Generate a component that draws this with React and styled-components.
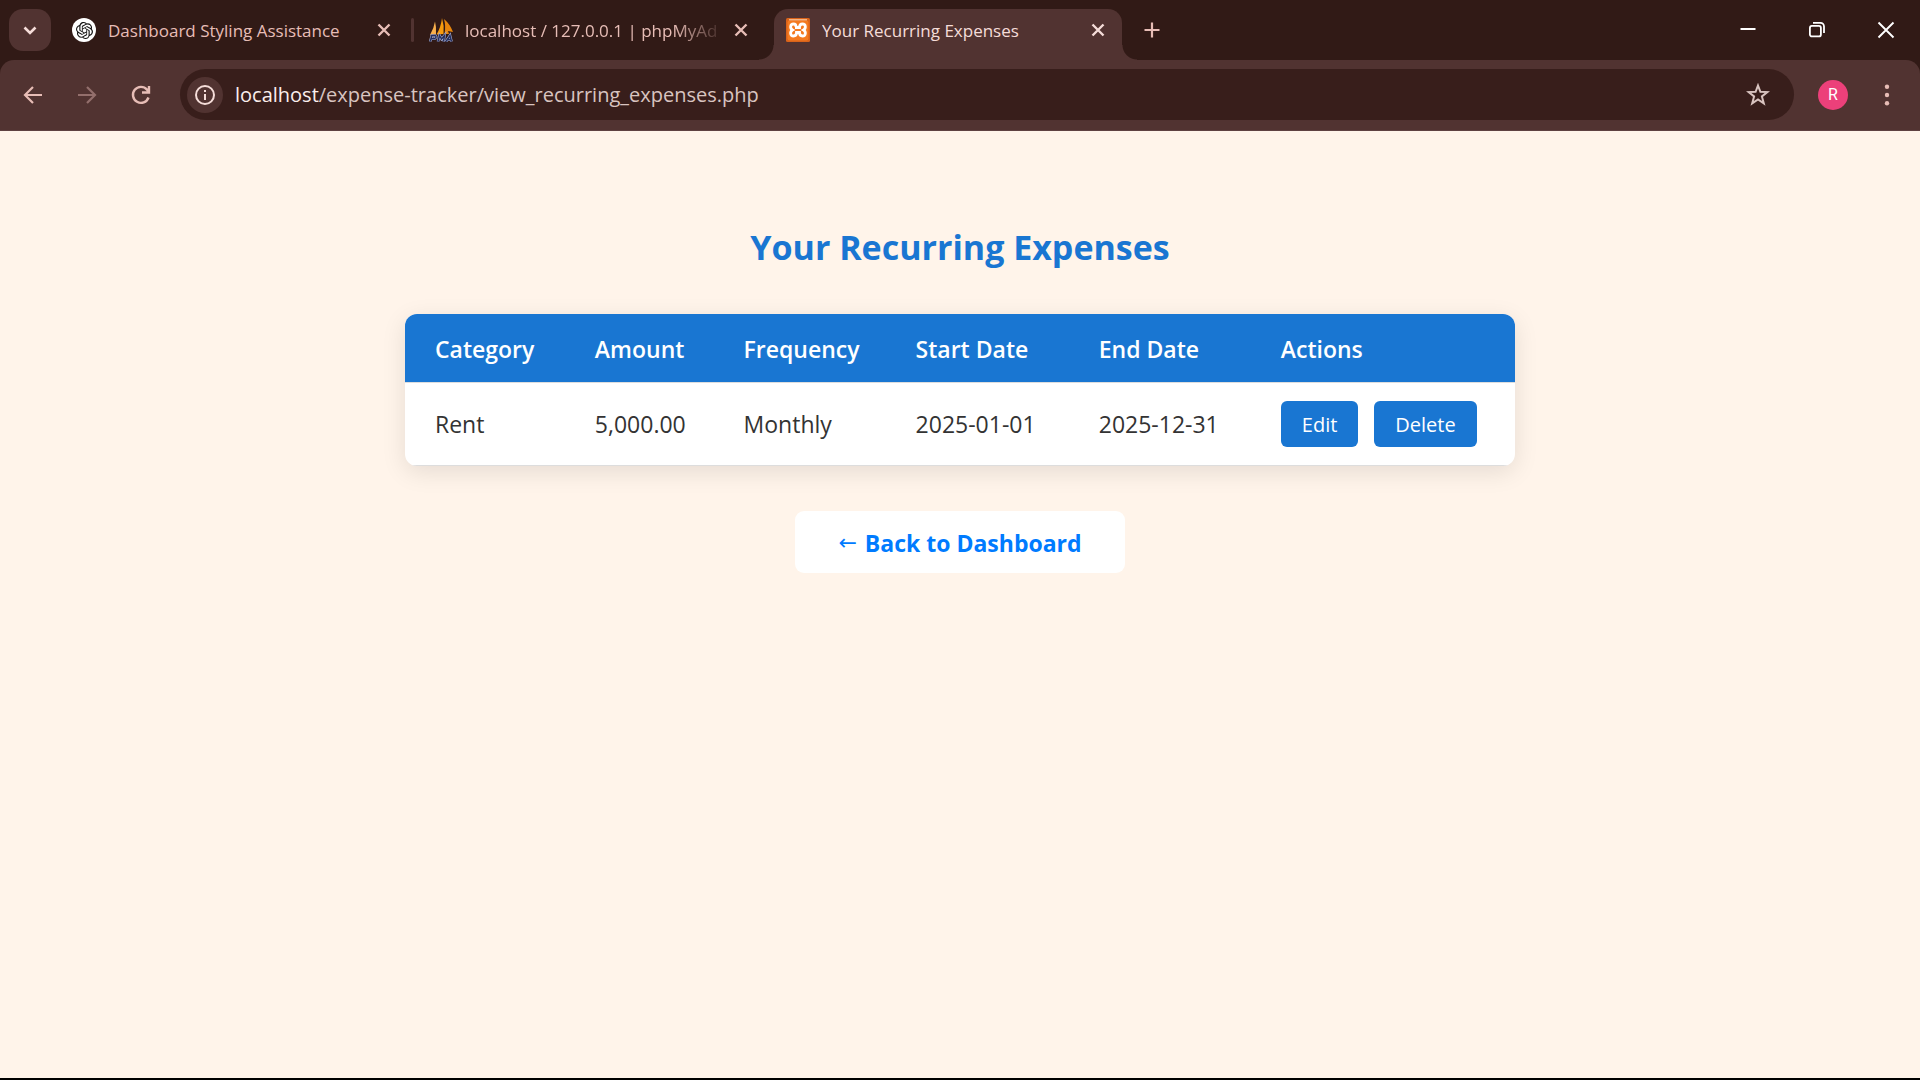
import React from 'react';
import styled, { createGlobalStyle } from 'styled-components';
import { SiOpenai } from 'react-icons/si';

const Global = createGlobalStyle`
  * { box-sizing: border-box; }
  body { margin: 0; background: #fff4ea; }
  button, input { font-family: inherit; }
`;

const Screen = styled.div`
  min-height: 100vh;
  display: flex;
  flex-direction: column;
  font-family: "Open Sans", "Noto Sans", sans-serif;
  color: #333;
`;

const TabStrip = styled.div`
  display: flex;
  align-items: center;
  height: 60px;
  padding-left: 9px;
  background: #311a16;
`;

const Tabs = styled.div`
  display: flex;
  align-items: center;
  align-self: stretch;
  margin-left: 9px;
`;

const IconButton = styled.button`
  display: flex;
  align-items: center;
  justify-content: center;
  flex: none;
  width: ${(p) => p.$size || 42}px;
  height: ${(p) => p.$size || 42}px;
  padding: 0;
  border: 0;
  border-radius: ${(p) => (p.$round ? '50%' : '14px')};
  background: ${(p) => p.$fill || 'transparent'};
  color: ${(p) => p.$color || '#e7bdb6'};
  svg { display: block; flex: none; }
`;

const Tab = styled.div`
  display: flex;
  align-items: center;
  flex: none;
  gap: 12px;
  width: 348px;
  height: 42px;
  padding: 0 12px;
  color: #e7bdb6;
  svg { flex: none; }
`;

const ActiveTab = styled(Tab)`
  position: relative;
  align-self: flex-end;
  height: 51px;
  margin-left: 9px;
  padding-bottom: 9px;
  border-radius: 14px 14px 0 0;
  background: #513331;
  color: #f5ddd9;
  &::before, &::after {
    content: "";
    position: absolute;
    bottom: 0;
    width: 15px;
    height: 15px;
  }
  &::before {
    right: 100%;
    background: radial-gradient(circle at 0 0, transparent 14px, #513331 15px);
  }
  &::after {
    left: 100%;
    background: radial-gradient(circle at 100% 0, transparent 14px, #513331 15px);
  }
`;

const TabTitle = styled.span`
  flex: 1;
  min-width: 0;
  margin-right: -8px;
  padding-top: 2px;
  overflow: hidden;
  white-space: nowrap;
  font-size: 17px;
  line-height: 24px;
  ${(p) => p.$fade && 'mask-image: linear-gradient(to right, #000 80%, transparent);'}
`;

const Separator = styled.span`
  flex: none;
  width: 3px;
  height: 24px;
  margin: 0 3px;
  border-radius: 2px;
  background: #513331;
`;

const Badge = styled.span`
  display: flex;
  align-items: center;
  justify-content: center;
  flex: none;
  width: 24px;
  height: 24px;
  border-radius: 50%;
  background: #fff;
  color: #111;
`;

const WindowControls = styled.div`
  display: flex;
  margin-left: auto;
`;

const WindowButton = styled.button`
  display: flex;
  align-items: center;
  justify-content: center;
  width: 69px;
  height: 60px;
  padding: 0;
  border: 0;
  background: transparent;
  color: #fff;
`;

const ToolbarFrame = styled.div`
  background: #311a16;
`;

const Toolbar = styled.div`
  display: flex;
  align-items: center;
  height: 71px;
  padding: 9px 12px 10px;
  border-radius: 14px 14px 0 0;
  background: #513331;
  border-bottom: 1px solid #5e4141;
`;

const NavButtons = styled.div`
  display: flex;
  gap: 12px;
  margin-right: 18px;
`;

const AddressBar = styled.div`
  display: flex;
  flex: 1;
  align-items: center;
  min-width: 0;
  height: 51px;
  padding: 0 15px 0 7px;
  border-radius: 26px;
  background: #381e1b;
`;

const Address = styled.div`
  flex: 1;
  min-width: 0;
  margin-left: 12px;
  overflow: hidden;
  white-space: nowrap;
  font-size: 20px;
  line-height: 30px;
  color: #d9c4c0;
  strong { font-weight: 400; color: #fbeeec; }
`;

const Profile = styled.button`
  flex: none;
  width: 30px;
  height: 30px;
  margin: 0 18px 0 24px;
  padding: 0;
  border: 0;
  border-radius: 50%;
  background: #ec407a;
  color: #fff;
  font: 16px/30px Roboto, sans-serif;
`;

const Page = styled.main`
  display: flex;
  flex: 1;
  flex-direction: column;
  align-items: center;
  padding: 89px 24px 48px;
  background: #fff4ea;
  border-bottom: 2px solid #000;
`;

const Title = styled.h1`
  margin: 0 0 40px;
  font-size: 34px;
  line-height: 54px;
  font-weight: 700;
  color: #1976d2;
`;

const Card = styled.div`
  width: 100%;
  max-width: 1110px;
  overflow: hidden;
  border-radius: 12px;
  background: #fff;
  box-shadow: 0 6px 24px rgba(0, 0, 0, 0.1);
`;

const Table = styled.table`
  width: 100%;
  border-collapse: separate;
  border-spacing: 0;
  table-layout: fixed;
  text-align: left;
  font-size: 23px;
  line-height: 32px;
`;

const Col = styled.col`
  width: ${(p) => p.$w};
`;

const HeadCell = styled.th`
  padding: 19px 0 17px 30px;
  background: #1976d2;
  background-clip: padding-box;
  border-bottom: 1px solid #ddd;
  color: #fff;
  font-weight: 600;
`;

const Cell = styled.td`
  padding: 18px 0 18px 30px;
  border-bottom: 1px solid #ddd;
`;

const Actions = styled.div`
  display: flex;
  gap: 16px;
`;

const ActionButton = styled.button`
  height: 46px;
  padding: 2px 21px 0;
  border: 0;
  border-radius: 6px;
  background: #1976d2;
  color: #fff;
  font-size: 20px;
  line-height: 30px;
`;

const BackLink = styled.a`
  display: flex;
  gap: 8px;
  margin-top: 45px;
  padding: 16px 43px 14px;
  border-radius: 9px;
  background: #fff;
  color: #007bff;
  font-size: 23px;
  line-height: 32px;
  font-weight: 700;
  text-decoration: none;
`;

const Arrow = styled.span`
  font-family: "DejaVu Sans", sans-serif;
  font-weight: 400;
  font-size: 22px;
`;

const Stroke = ({ size = 24, w = 2, children }) => (
  <svg width={size} height={size} viewBox={`0 0 ${size} ${size}`} fill="none" stroke="currentColor" strokeWidth={w} aria-hidden="true">
    {children}
  </svg>
);

const CloseTab = ({ color }) => (
  <IconButton $size={24} $color={color} aria-label="Close tab">
    <Stroke w={2.4}><path d="M6.500 6.500l11 11M17.500 6.500l-11 11" /></Stroke>
  </IconButton>
);

const SailIcon = () => (
  <svg width="24" height="24" viewBox="0 0 24 24" aria-hidden="true">
    <path d="M6 3.500Q7.500 9 7 16L1 17Q5 10 6 3.500Z" fill="#f9b04c" />
    <path d="M13 0Q15.500 8 14.500 16L7.500 16.500Q12 9 13 0Z" fill="#f89c0e" />
    <path d="M15 1Q21 6 24 14L19 13L20 16L15.500 16Q17 8 15 1Z" fill="#e8850c" />
    <g fill="none" stroke="#a9b3dc" strokeWidth="2.600">
      <path d="M1.200 23.500l1.600-6h3.400q2 1.600-.6 3.200H2.500M9 23.500l1.500-6 2 3.500 3-3.500-1 6M17 23.500l4-6 1.500 6M18.500 21.500h4" />
    </g>
    <g fill="none" stroke="#26305f" strokeWidth="1.500">
      <path d="M1.200 23.500l1.600-6h3.400q2 1.600-.6 3.200H2.500M9 23.500l1.500-6 2 3.500 3-3.500-1 6M17 23.500l4-6 1.500 6M18.500 21.500h4" />
    </g>
  </svg>
);

const XamppIcon = () => (
  <svg width="24" height="24" viewBox="0 0 24 24" aria-hidden="true">
    <rect width="24" height="24" rx="1.500" fill="#d9631a" />
    <rect x="1.500" y="2.500" width="21" height="20" rx="2" fill="#f47a20" />
    <path d="M3 1.800h18" stroke="#f9c9a0" strokeWidth="1.200" />
    <path d="M10 9V8.500C10 7 9 6 7.500 6C4 6 3.800 10.500 6.500 12C3.800 13.500 4 18 7.500 18C9.500 18 10.500 16.800 10.500 14.500H13.500C13.500 16.800 14.500 18 16.500 18C20 18 20.200 13.500 17.500 12C20.200 10.500 20 6 16.500 6C14.500 6 13.500 7.200 13.500 9.500H9" fill="none" stroke="#fff" strokeWidth="2.800" />
  </svg>
);

const columns = [
  ['Category', '14.4%'],
  ['Amount', '13.4%'],
  ['Frequency', '15.5%'],
  ['Start Date', '16.5%'],
  ['End Date', '16.4%'],
  ['Actions', 'auto'],
];

const expenses = [['Rent', '5,000.00', 'Monthly', '2025-01-01', '2025-12-31']];

export default function App() {
  return (
    <Screen>
      <Global />
      <TabStrip>
        <IconButton $fill="#513331" $color="#f5ddd9" aria-label="Search tabs">
          <Stroke w={2.6}><path d="M6.500 9.500l5.500 5.500 5.500-5.500" /></Stroke>
        </IconButton>
        <Tabs>
          <Tab>
            <Badge><SiOpenai size={17} /></Badge>
            <TabTitle>Dashboard Styling Assistance</TabTitle>
            <CloseTab />
          </Tab>
          <Separator />
          <Tab>
            <SailIcon />
            <TabTitle $fade>localhost / 127.0.0.1 | phpMyAd</TabTitle>
            <CloseTab />
          </Tab>
          <ActiveTab>
            <XamppIcon />
            <TabTitle>Your Recurring Expenses</TabTitle>
            <CloseTab color="#f5ddd9" />
          </ActiveTab>
        </Tabs>
        <IconButton $size={60} aria-label="New tab">
          <Stroke w={2.2}><path d="M12 4.500v15M4.500 12h15" /></Stroke>
        </IconButton>
        <WindowControls>
          <WindowButton aria-label="Minimize"><Stroke><path d="M4.500 11h15" /></Stroke></WindowButton>
          <WindowButton aria-label="Restore">
            <Stroke w={1.8}>
              <rect x="4.900" y="7.900" width="11" height="10.500" rx="2" />
              <path d="M8 4.900h7.500a3.500 3.500 0 0 1 3.500 3.500V15" />
            </Stroke>
          </WindowButton>
          <WindowButton aria-label="Close"><Stroke w={1.9}><path d="M4.500 4.500l15 15M19.500 4.500l-15 15" /></Stroke></WindowButton>
        </WindowControls>
      </TabStrip>
      <ToolbarFrame>
        <Toolbar>
          <NavButtons>
            <IconButton aria-label="Back">
              <Stroke w={2.2}><path d="M21 12H5M12 4l-8 8 8 8" /></Stroke>
            </IconButton>
            <IconButton $color="#936f6c" aria-label="Forward">
              <Stroke w={2.2}><path d="M3 12h16M12 4l8 8-8 8" /></Stroke>
            </IconButton>
            <IconButton aria-label="Reload">
              <Stroke w={2.4}><path d="M19.500 14.500A8 8 0 1 1 18 6.600L20 9M20 3v6.500h-7" /></Stroke>
            </IconButton>
          </NavButtons>
          <AddressBar>
            <IconButton $size={36} $round $fill="#513331" $color="#f5ddd9" aria-label="Site information">
              <Stroke><circle cx="12" cy="12" r="9" /><path d="M12 11v6M12 7v2" /></Stroke>
            </IconButton>
            <Address><strong>localhost</strong>/expense-tracker/view_recurring_expenses.php</Address>
            <IconButton $color="#d9c4c0" aria-label="Bookmark this tab">
              <Stroke><path d="M12 2.500l2.400 6.300 7 .3-5.500 4.300 1.900 6.900-5.800-3.900-5.800 3.900 1.900-6.900L2.600 9.100l7-.3z" /></Stroke>
            </IconButton>
          </AddressBar>
          <Profile aria-label="Profile R">R</Profile>
          <IconButton aria-label="Menu">
            <svg width="24" height="24" viewBox="0 0 24 24" fill="currentColor" aria-hidden="true">
              <circle cx="12" cy="3.700" r="2.200" /><circle cx="12" cy="12" r="2.200" /><circle cx="12" cy="20.300" r="2.200" />
            </svg>
          </IconButton>
        </Toolbar>
      </ToolbarFrame>
      <Page>
        <Title>Your Recurring Expenses</Title>
        <Card>
          <Table>
            <colgroup>{columns.map(([name, w]) => <Col key={name} $w={w} />)}</colgroup>
            <thead>
              <tr>{columns.map(([name]) => <HeadCell key={name} scope="col">{name}</HeadCell>)}</tr>
            </thead>
            <tbody>
              {expenses.map((row) => (
                <tr key={row[0]}>
                  {row.map((value) => <Cell key={value}>{value}</Cell>)}
                  <Cell>
                    <Actions>
                      <ActionButton>Edit</ActionButton>
                      <ActionButton>Delete</ActionButton>
                    </Actions>
                  </Cell>
                </tr>
              ))}
            </tbody>
          </Table>
        </Card>
        <BackLink href="#dashboard"><Arrow>←</Arrow>Back to Dashboard</BackLink>
      </Page>
    </Screen>
  );
}
